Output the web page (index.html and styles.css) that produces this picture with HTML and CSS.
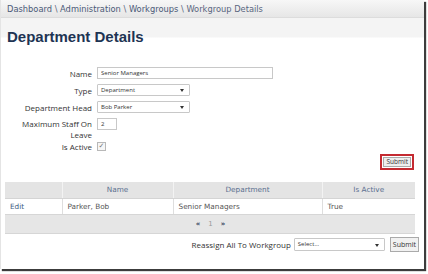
FILE: index.html
```html
<!DOCTYPE html>
<html lang="en">
<head>
  <meta charset="UTF-8">
  <title>Department Details</title>
  <link rel="stylesheet" href="styles.css">
</head>
<body>
  <div class="page">
    <div class="crumbs">
      <a href="#">Dashboard</a> \ <a href="#">Administration</a> \ <a href="#">Workgroups</a> \ <span>Workgroup Details</span>
    </div>
    <h1>Department Details</h1>

    <form class="details">
      <label for="name">Name</label>
      <input type="text" id="name" class="wide" value="Senior Managers">

      <label for="type">Type</label>
      <div class="select"><span>Department</span></div>

      <label for="head">Department Head</label>
      <div class="select"><span>Bob Parker</span></div>

      <label for="staff" class="top">Maximum Staff On Leave</label>
      <input type="text" id="staff" class="tiny top" value="2">

      <label class="active-label">Is Active</label>
      <span class="check active-box">&#10003;</span>
    </form>

    <div class="actions">
      <span class="highlight"><button type="button">Submit</button></span>
    </div>

    <table class="list">
      <thead>
        <tr><th class="c1"></th><th class="c2">Name</th><th class="c3">Department</th><th class="c4">Is Active</th></tr>
      </thead>
      <tbody>
        <tr><td><a href="#">Edit</a></td><td>Parker, Bob</td><td>Senior Managers</td><td>True</td></tr>
      </tbody>
      <tfoot>
        <tr><td colspan="4"><span>&laquo;</span><span class="num">1</span><span>&raquo;</span></td></tr>
      </tfoot>
    </table>

    <div class="reassign">
      <label>Reassign All To Workgroup</label>
      <div class="select long"><span>Select...</span></div>
      <button type="button">Submit</button>
    </div>
  </div>
</body>
</html>
```

FILE: styles.css
```css
*{box-sizing:border-box;margin:0;padding:0}
html,body{background:#fff}
body{width:428px;height:274px;overflow:hidden}
.page{width:424px;height:269px;background:#fff;border-left:1px solid #e4e4e4;box-shadow:2px 2px 1px #3c3c3c;font-family:"DejaVu Sans",Verdana,sans-serif;font-size:8px;color:#444}
.crumbs{height:18px;padding:4px 6px 0;background:linear-gradient(#f7f7f7,#e6e6e6);border-bottom:1px solid #dcdcdc;color:#5a6680;font-size:8.3px;white-space:nowrap}
.crumbs a{color:#4b5a78;text-decoration:none}
h1{height:28px;padding:10px 6px 0;font:bold 15px/18px "Liberation Sans",Arial,sans-serif;color:#1e3453;background:linear-gradient(#f4f4f4 0,#f4f4f4 19px,#fff 20px)}

.details{display:grid;grid-template-columns:70px auto;column-gap:5px;row-gap:5px;margin:21px 0 0 21px;align-items:center;justify-items:start;font-family:"Open Sans",sans-serif;font-size:8px;color:#333}
.details label{justify-self:end;text-align:right;line-height:11px}
.details .top{align-self:start}
.details input{height:12px;border:1px solid #c8c8c8;padding:0 3px;font:6px "Open Sans",sans-serif;color:#333;background:#fff}
.details .wide{width:176px}
.details .tiny{width:20px}
.details .active-label,.details .active-box{margin-top:-4px}
.select{position:relative;width:93px;height:12px;border:1px solid #c8c8c8;border-radius:1px;padding:0 3px;font:6px/10px "Open Sans",sans-serif;color:#333;background:#fff}
.select::after{content:"";position:absolute;right:5px;top:4px;border-left:2px solid transparent;border-right:2px solid transparent;border-top:3px solid #333}
.check{display:inline-block;width:9px;height:9px;border:1px solid #b8b8b8;font:7px/7px "DejaVu Sans",sans-serif;color:#777;text-align:center;background:#f6f6f6}

.actions{display:flex;justify-content:flex-end;padding-right:10px;margin-top:2px}
.highlight{display:inline-block;border:2px solid #c42a31;padding:1px}
.highlight button{display:block;height:10px;padding:0 2px;border:1px solid #aaa;background:#eee;font:6.5px/8px "Open Sans",sans-serif;color:#333}

.list{margin:12px 0 0 4px;width:410px;border-collapse:collapse;font-size:7.3px}
.list th{height:16px;background:#e4e4e4;font-weight:normal;color:#5b7090;border-left:1px solid #f3f3f3;border-bottom:1px solid #d4d4d4}
.list .c1{width:57px;border-left:none}
.list .c2{width:111px}
.list .c3{width:149px}
.list .c4{width:93px}
.list td{height:16px;padding:0 5px;color:#555;border-left:1px solid #dedede;border-bottom:1px solid #d6d6d6;background:#fff}
.list td:first-child{border-left:none}
.list td a{color:#3e5c83;text-decoration:none}
.list tfoot td{height:19px;background:#e6e6e6;text-align:center;padding-right:4px;color:#2f3d58;font-size:7px;font-weight:bold;border-left:none}
.list tfoot span{margin:0 4px}
.list tfoot .num{color:#999;font-weight:normal}

.reassign{display:flex;align-items:center;justify-content:flex-end;gap:3px;margin-top:3px;padding-right:5px;font-family:"Open Sans",sans-serif;font-size:8px;color:#333}
.reassign .long{width:91px;height:13px;font-size:6px;line-height:11px}
.reassign .long::after{top:5px}
.reassign button{height:15px;margin-left:2px;padding:0 2px;border:1px solid #aaa;background:#f1f1f1;font:7px "Open Sans",sans-serif;color:#333}
```
